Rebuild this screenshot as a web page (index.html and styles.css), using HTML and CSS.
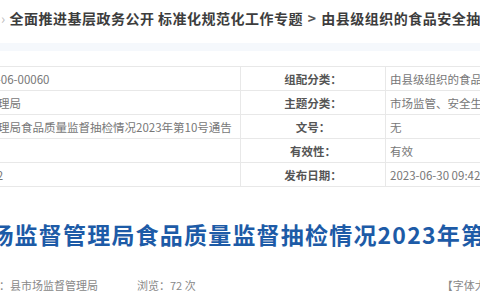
FILE: index.html
```html
<!DOCTYPE html>
<html lang="zh-CN">

<head>
    <meta charset="UTF-8">
    <title>县市场监督管理局食品质量监督抽检情况2023年第10号通告</title>
    <link rel="stylesheet" href="styles.css">
</head>

<body>
    <!-- 面包屑 -->
    <div class="crumb">
        <span class="crumb-sep">›</span>
        <span class="crumb-link">全面推进基层政务公开 标准化规范化工作专题</span>
        <span class="crumb-arrow">&gt;</span>
        <span class="crumb-link">由县级组织的食品安全抽检信息</span>
    </div>
    <div class="crumb-line"></div>

    <!-- 信息表 -->
    <table class="info">
        <colgroup>
            <col class="col-key1">
            <col class="col-val1">
            <col class="col-key2">
            <col class="col-val2">
        </colgroup>
        <tr>
            <td class="key">索引号：</td>
            <td class="val">114413-2023-06-00060</td>
            <td class="key">组配分类：</td>
            <td class="val">由县级组织的食品安全抽检信息</td>
        </tr>
        <tr>
            <td class="key">发布机构：</td>
            <td class="val">县市场监督管理局</td>
            <td class="key">主题分类：</td>
            <td class="val">市场监管、安全生产监管</td>
        </tr>
        <tr>
            <td class="key">名称：</td>
            <td class="val">县市场监督管理局食品质量监督抽检情况2023年第10号通告</td>
            <td class="key">文号：</td>
            <td class="val">无</td>
        </tr>
        <tr>
            <td class="key">废止日期：</td>
            <td class="val"></td>
            <td class="key">有效性：</td>
            <td class="val">有效</td>
        </tr>
        <tr>
            <td class="key">成文日期：</td>
            <td class="val">2023年06月22</td>
            <td class="key">发布日期：</td>
            <td class="val">2023-06-30 09:42:18</td>
        </tr>
    </table>

    <!-- 标题 -->
    <h1 class="title">县市场监督管理局食品质量监督抽检情况2023年第10号通告</h1>

    <div class="meta">
        <span class="source">来源：县市场监督管理局</span>
        <span class="views">浏览：72 次</span>
        <span class="font-size">【字体大 中 小】</span>
    </div>
</body>

</html>
```

FILE: styles.css
```css
* {
    margin: 0;
    padding: 0;
    box-sizing: border-box;
}

html,
body {
    width: 480px;
    height: 300px;
    overflow: hidden;
}

body {
    background: #fff;
    font-family: "Noto Sans CJK SC", "Noto Sans", sans-serif;
    color: #666;
    white-space: nowrap;
}

.crumb {
    height: 36px;
    line-height: 36px;
    font-size: 14px;
    font-weight: bold;
    letter-spacing: 0.5px;
    color: #3d3d3d;
}

.crumb-sep {
    color: #bbb;
    font-weight: normal;
    margin-left: 1px;
}

.crumb-arrow {
    color: #555;
    margin: 0 1px;
}

.crumb-line {
    height: 8px;
    margin-top: 7px;
    background: #f5f8fc;
}

.info {
    margin: 15px 0 0 -160px;
    width: 745px;
    table-layout: fixed;
    border-collapse: collapse;
    font-size: 11.5px;
}

.col-key1 {
    width: 84px;
}

.col-val1 {
    width: 316px;
}

.col-key2 {
    width: 145px;
}

.col-val2 {
    width: 200px;
}

.info td {
    height: 24px;
    line-height: 16px;
    padding: 0 4px;
    border: 1px solid #e8e8e8;
    overflow: hidden;
}

.info .key {
    text-align: center;
    font-weight: bold;
    color: #555;
}

.info .val {
    color: #777;
}

.title {
    margin: 32px 0 0 -58px;
    font-size: 23px;
    line-height: 30px;
    letter-spacing: 1.2px;
    color: #1d5ba7;
}

.meta {
    display: flex;
    margin: 26px 0 0 -23px;
    font-size: 11px;
    line-height: 20px;
    color: #888;
}

.views {
    margin-left: 39px;
}

.font-size {
    margin-left: 246px;
}
```
